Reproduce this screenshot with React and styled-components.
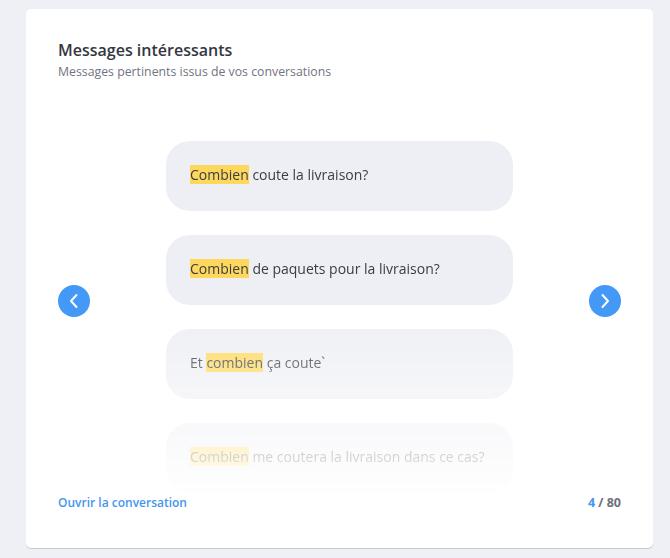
import React from "react";
import styled, { createGlobalStyle } from "styled-components";

const Global = createGlobalStyle`
  html, body { margin: 0; padding: 0; background: #eef0f5; }
  body { font-family: "Open Sans", "Liberation Sans", sans-serif; }
  * { box-sizing: border-box; }
`;

const Page = styled.div`
  padding: 9px 17px 9px 26px;
  width: 670px;
  height: 558px;
`;

const Card = styled.section`
  width: 627px;
  height: 539px;
  background: #fff;
  border-radius: 5px;
  box-shadow: 0 1px 0 #c9cbd1;
  padding: 30px 32px 0 32px;
  display: flex;
  flex-direction: column;
`;

const Title = styled.h2`
  margin: 0;
  font-size: 16px;
  font-weight: 600;
  color: #34373f;
  line-height: 22px;
`;

const Subtitle = styled.p`
  margin: 3px 0 0;
  font-size: 12.3px;
  color: #70747f;
  line-height: 16px;
`;

const Carousel = styled.div`
  display: flex;
  align-items: center;
  justify-content: space-between;
  margin-top: 29px;
`;

const ArrowButton = styled.button`
  width: 32px;
  height: 32px;
  border-radius: 50%;
  border: none;
  padding: 0;
  background: #4499f7;
  display: flex;
  align-items: center;
  justify-content: center;
  cursor: pointer;
`;

const List = styled.div`
  width: 347px;
  padding-top: 32px;
  display: flex;
  flex-direction: column;
  gap: 24px;
  -webkit-mask-image: linear-gradient(to bottom, #000 200px, transparent 392px);
  mask-image: linear-gradient(to bottom, #000 200px, transparent 392px);
`;

const Bubble = styled.div`
  height: 70px;
  border-radius: 24px;
  background: #eeeff4;
  padding: 0 24px 3px;
  display: flex;
  align-items: center;
  font-size: 14px;
  color: #3a3d46;
  white-space: nowrap;
`;

const BubbleText = styled.span`
  line-height: 16px;
`;

const Mark = styled.mark`
  background: #fdd85c;
  color: inherit;
  padding: 0;
`;

const Footer = styled.div`
  display: flex;
  justify-content: space-between;
  align-items: center;
  margin-top: 1px;
  font-size: 12px;
  font-weight: 700;
`;

const Link = styled.a`
  color: #4595ee;
  text-decoration: none;
  font-weight: 600;
  cursor: pointer;
`;

const Counter = styled.div`
  color: #6c707b;
  font-size: 12.5px;
`;

const Current = styled.span`
  color: #4595ee;
`;

const Chevron = ({ dir }) => (
  <svg width="14" height="16" viewBox="0 0 14 16" fill="none">
    <path
      d={dir === "left" ? "M9.5 2L4 8L9.5 14" : "M4.5 2L10 8L4.5 14"}
      stroke="#fff"
      strokeWidth="2"
      strokeLinecap="round"
      strokeLinejoin="round"
    />
  </svg>
);

const messages = [
  ["", "Combien", " coute la livraison?"],
  ["", "Combien", " de paquets pour la livraison?"],
  ["Et ", "combien", " ça coute`"],
  ["", "Combien", " me coutera la livraison dans ce cas?"],
];

export default function App() {
  return (
    <>
      <Global />
      <Page>
        <Card>
          <Title>Messages intéressants</Title>
          <Subtitle>Messages pertinents issus de vos conversations</Subtitle>
          <Carousel>
            <ArrowButton aria-label="Précédent">
              <Chevron dir="left" />
            </ArrowButton>
            <List>
              {messages.map(([pre, hl, post], i) => (
                <Bubble key={i}>
                  <BubbleText>
                    {pre}
                    <Mark>{hl}</Mark>
                    {post}
                  </BubbleText>
                </Bubble>
              ))}
            </List>
            <ArrowButton aria-label="Suivant">
              <Chevron dir="right" />
            </ArrowButton>
          </Carousel>
          <Footer>
            <Link>Ouvrir la conversation</Link>
            <Counter>
              <Current>4</Current> / 80
            </Counter>
          </Footer>
        </Card>
      </Page>
    </>
  );
}
